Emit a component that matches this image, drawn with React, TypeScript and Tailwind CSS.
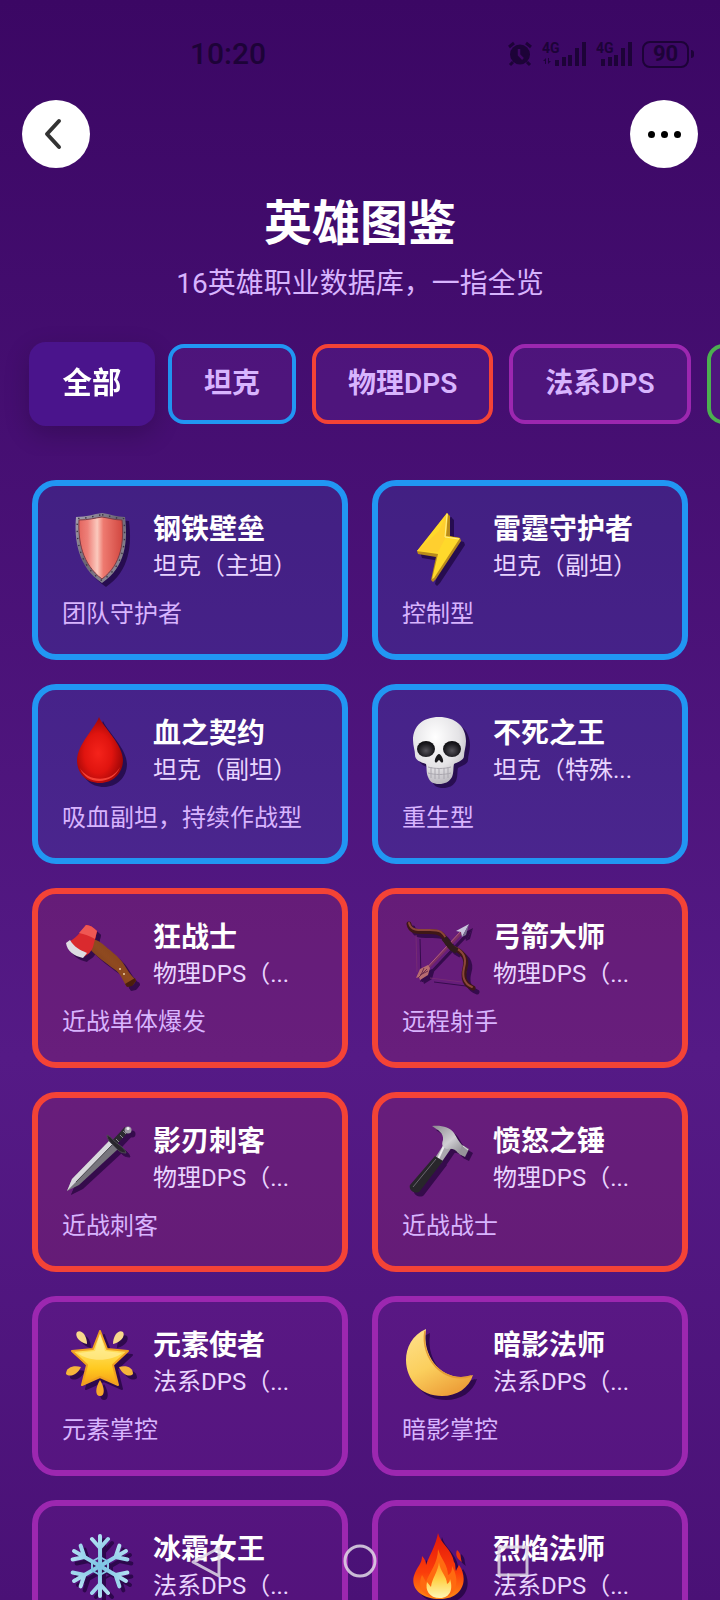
import { useState } from 'react';
import type { ReactNode } from 'react';
import clsx from 'clsx';

type Category = 'tank' | 'physical' | 'magic' | 'healer';

interface Hero {
  name: string;
  role: string;
  description: string;
  category: Category;
  icon: ReactNode;
}

const categoryStyles: Record<Category, { border: string; card: string }> = {
  tank: { border: 'border-[#2196f3]', card: 'bg-[#2196f3]/12' },
  physical: { border: 'border-[#f44336]', card: 'bg-[#f44336]/12' },
  magic: { border: 'border-[#9c27b0]', card: 'bg-[#9c27b0]/12' },
  healer: { border: 'border-[#4caf50]', card: 'bg-[#4caf50]/12' },
};

const filters: { id: Category; text: string }[] = [
  { id: 'tank', text: '坦克' },
  { id: 'physical', text: '物理DPS' },
  { id: 'magic', text: '法系DPS' },
  { id: 'healer', text: '治疗' },
];

function Shield() {
  const outline = 'M38 3C46 4 53 7 61 7C64 30 62 57 38 73C14 57 10 30 12 7C22 7 30 4 38 3Z';
  return (
    <g transform="translate(2 0)">
      <defs>
        <linearGradient id="shieldRim" x1="0" y1="0" x2="1" y2="1">
          <stop offset="0" stopColor="#a9a4b3" />
          <stop offset=".45" stopColor="#6b6574" />
          <stop offset=".8" stopColor="#8a8592" />
          <stop offset="1" stopColor="#3e3946" />
        </linearGradient>
        <linearGradient id="shieldFace" x1="0" y1="0" x2="1" y2="0">
          <stop offset="0" stopColor="#e4665f" />
          <stop offset=".2" stopColor="#ee8079" />
          <stop offset=".42" stopColor="#fbc9bd" />
          <stop offset=".56" stopColor="#ee7a70" />
          <stop offset="1" stopColor="#d14740" />
        </linearGradient>
      </defs>
      <path d={outline} fill="url(#shieldRim)" />
      <path d={outline} fill="none" stroke="#3b3644" strokeWidth="1.500" strokeDasharray="1.500 6" transform="translate(2.3 2) scale(.94)" />
      <path d="M38 7C45 8 51 10 58 10C60 31 58 54 38 69C18 54 14 31 15 10C24 10 31 8 38 7Z" fill="url(#shieldFace)" stroke="#7d3a44" strokeWidth="1" />
    </g>
  );
}

function Bolt() {
  return (
    <>
      <path d="M45 3L48 6L48 26L58 28L59 31L34 69L31 72L29 70L34 47L16 44L15 41Z" fill="#b98a1b" />
      <path d="M45 3L46 4L44 26L58 28L32 68L30 69L36 44L15 41Z" fill="#ffd92b" />
      <path d="M45 3L37 21L15 41L36 42L44 27Z" fill="#ffcf2f" />
      <path d="M45 4L43 27L57 29" fill="none" stroke="#fff08a" strokeWidth="1" />
    </>
  );
}

function Drop() {
  return (
    <>
      <defs>
        <radialGradient id="drop" cx=".46" cy=".55" r=".6">
          <stop offset="0" stopColor="#f5231b" />
          <stop offset=".5" stopColor="#e0140f" />
          <stop offset=".85" stopColor="#a80808" />
          <stop offset="1" stopColor="#8a0508" />
        </radialGradient>
      </defs>
      <path d="M37 3C42 14 61 31 61 46C61 60 50 69 38 69C25 69 15 60 15 46C15 31 33 14 37 3Z" fill="url(#drop)" />
      <path d="M18 54C25 67 49 70 58 53C52 70 25 73 18 54Z" fill="#ff4a3d" opacity=".85" />
    </>
  );
}

function Skull() {
  return (
    <>
      <defs>
        <radialGradient id="skull" cx=".42" cy=".3" r=".75">
          <stop offset="0" stopColor="#ffffff" />
          <stop offset=".6" stopColor="#e4e3e6" />
          <stop offset="1" stopColor="#b4b1b8" />
        </radialGradient>
        <radialGradient id="socket" cx=".5" cy=".6" r=".6">
          <stop offset="0" stopColor="#55535a" />
          <stop offset=".7" stopColor="#1c1b20" />
          <stop offset="1" stopColor="#0c0b0f" />
        </radialGradient>
      </defs>
      <path d="M37 3C53 3 64 12 64 27C64 33 62 37 62 42C62 46 56 48 52 50C51 54 52 58 50 63C47 68 43 70 37 70C31 70 28 68 26 63C24 58 25 54 24 50C18 48 13 46 13 41C13 36 11 32 11 26C11 12 21 3 37 3Z" fill="url(#skull)" />
      <ellipse cx="24" cy="35" rx="9" ry="8" fill="url(#socket)" />
      <ellipse cx="50" cy="35" rx="9" ry="8" fill="url(#socket)" />
      <path d="M37 40C39 40 42 46 41 48C39 50 38 46 37 46C36 46 35 50 33 48C32 46 35 40 37 40Z" fill="#19181c" />
      <path d="M26 53C33 55 42 55 49 53M26 59C33 61 42 61 49 59M29 53V64M33 54V65M37 54V65M42 54V65M46 53V64" fill="none" stroke="#aaa7af" strokeWidth="1" />
    </>
  );
}

function Axe() {
  return (
    <>
      <defs>
        <linearGradient id="axeHandle" x1="0" y1="1" x2="1" y2="0">
          <stop offset="0" stopColor="#6b3012" />
          <stop offset=".5" stopColor="#8f4a20" />
          <stop offset="1" stopColor="#7c3a16" />
        </linearGradient>
      </defs>
      <path d="M26 20C31 20 38 23 43 28C50 34 57 39 61 45C65 51 68 57 74 62C73 66 69 69 65 68C61 65 60 56 52 51C45 46 33 37 28 31Z" fill="url(#axeHandle)" />
      <path d="M63 66L73 60L74 63L70 68L65 69Z" fill="#4c1e0c" />
      <path d="M24 7C28 7 31 9 35 13C34 19 32 24 31 29C29 34 26 37 21 39C14 37 7 32 5 25C13 21 19 14 24 7Z" fill="#da2a2e" />
      <path d="M24 7C28 7 31 9 35 13L33 21C28 18 22 16 17 15Z" fill="#ef5753" />
      <path d="M4 25L8 22C12 29 18 32 25 35L21 40C12 38 5 33 4 25Z" fill="#dedce2" />
      <circle cx="58" cy="51" r="1" fill="#ecd0a8" />
      <circle cx="62" cy="56" r="1" fill="#ecd0a8" />
    </>
  );
}

function Bow() {
  return (
    <>
      <path d="M14 17L15 54M28 60L60 64" stroke="#762b74" strokeWidth="1" fill="none" />
      <path d="M18 58L60 14" stroke="#7d2f62" strokeWidth="3" />
      <path d="M19 56L59 13" stroke="#b05c80" strokeWidth="1" />
      <path d="M7 6C9 20 30 9 39 16C45 20 44 28 51 30C60 33 66 40 63 50C61 58 61 66 71 70" fill="none" stroke="#3f1717" strokeWidth="5" strokeLinecap="round" />
      <path d="M7 5C10 18 30 8 39 14C45 18 45 26 52 29C61 33 65 40 62 50C60 58 62 66 70 69" fill="none" stroke="#8c4738" strokeWidth="2" strokeLinecap="round" />
      <path d="M42 20L50 30L55 33" fill="none" stroke="#301c1c" strokeWidth="6" />
      <path d="M67 6L54 13L59 14L60 19Z" fill="#c9c6dd" />
      <path d="M67 6L60 19L64 17Z" fill="#77718f" />
      <path d="M26 47L18 51L14 60L17 59L18 62L26 57L28 50Z" fill="#b86c70" />
      <path d="M25 51L16 60M22 50L19 57M26 53L18 57" stroke="#6c2d4d" strokeWidth="1" />
    </>
  );
}

function Sword() {
  return (
    <>
      <path d="M48 18L56 27L17 63L5 69L10 57Z" fill="#77757d" />
      <path d="M48 18L51 22L5 69L10 57Z" fill="#d9d8de" />
      <path d="M50 23L14 60" stroke="#4a4850" strokeWidth="1" />
      <path d="M52 21L65 7" stroke="#2b2930" strokeWidth="6" />
      <path d="M54 17L57 20M58 13L61 16M61 9L64 12" stroke="#898790" strokeWidth="1" />
      <path d="M45 13C50 15 52 20 56 22C60 25 63 27 64 31C58 31 56 28 53 25C49 21 45 18 45 13Z" fill="#29262d" stroke="#4c4952" strokeWidth="1" />
      <circle cx="66" cy="8" r="3.500" fill="#9d99a5" />
      <circle cx="66" cy="6.500" r="1.500" fill="#f2f1f6" />
    </>
  );
}

function Hammer() {
  return (
    <>
      <defs>
        <linearGradient id="hammer" x1="0" y1="0" x2="1" y2="1">
          <stop offset="0" stopColor="#8b898f" />
          <stop offset=".5" stopColor="#d0cfd3" />
          <stop offset="1" stopColor="#747278" />
        </linearGradient>
      </defs>
      <path d="M42 22L50 25L39 41L33 36Z" fill="#aaa8ae" />
      <path d="M42 24L36 37" stroke="#ecebee" strokeWidth="2" />
      <path d="M33 34L41 39L18 69C15 73 6 69 8 63Z" fill="#28262b" />
      <path d="M34 37L11 65" stroke="#6a676f" strokeWidth="1" />
      <path d="M30 4C39 3 48 5 52 11C55 16 57 20 60 23L66 27L62 34L56 31C54 27 49 26 45 27C41 26 39 23 41 18C42 11 36 8 30 4Z" fill="url(#hammer)" />
      <path d="M60 23L67 27L63 35L57 32Z" fill="#96939a" />
      <path d="M61 24L66 28" stroke="#dddce0" strokeWidth="1" />
    </>
  );
}

function Star() {
  return (
    <>
      <defs>
        <linearGradient id="star" x1="0" y1="0" x2="0" y2="1">
          <stop offset="0" stopColor="#fff29c" />
          <stop offset=".45" stopColor="#ffd94a" />
          <stop offset=".7" stopColor="#ffc91f" />
          <stop offset="1" stopColor="#f59d16" />
        </linearGradient>
      </defs>
      <path d="M38 5L45 23L66 25L51 39L56 59L38 51L20 59L25 39L10 25L31 23Z" fill="url(#star)" stroke="#f0a021" strokeWidth="2" strokeLinejoin="round" />
      <path d="M38 8L43 25L60 27C50 36 25 36 16 27L33 25Z" fill="#fff6b4" opacity=".5" />
      <path d="M15 6C19 3 25 9 25 18C19 17 12 11 15 6Z" fill="#f8d88c" />
      <path d="M61 6C57 3 51 9 51 18C57 17 64 11 61 6Z" fill="#f8d88c" />
      <path d="M4 48C4 41 12 39 19 41C16 48 8 52 4 48Z" fill="#f6b43b" />
      <path d="M71 48C71 41 64 39 57 41C60 48 67 52 71 48Z" fill="#f6b43b" />
      <path d="M38 54C43 62 43 70 38 70C33 70 33 62 38 54Z" fill="#f8a92b" />
    </>
  );
}

function Moon() {
  return (
    <>
      <defs>
        <linearGradient id="moon" x1=".1" y1="0" x2=".6" y2="1">
          <stop offset="0" stopColor="#ffe08a" />
          <stop offset=".55" stopColor="#fbcf5d" />
          <stop offset="1" stopColor="#eda03a" />
        </linearGradient>
      </defs>
      <path d="M24 3C10 9 4 22 4 34C4 54 19 70 40 70C55 70 67 62 71 49C44 58 19 34 24 3Z" fill="url(#moon)" />
      <path d="M23 5C18 33 43 59 69 50" fill="none" stroke="#e59b35" strokeWidth="1.500" />
    </>
  );
}

function Snowflake() {
  return (
    <>
      <defs>
        <linearGradient id="snow" gradientUnits="userSpaceOnUse" x1="-20" y1="-30" x2="20" y2="30">
          <stop offset="0" stopColor="#c4eaf7" />
          <stop offset=".5" stopColor="#7cc3e4" />
          <stop offset="1" stopColor="#b5e0f2" />
        </linearGradient>
      </defs>
      <g transform="translate(38 36)" fill="none" stroke="url(#snow)" strokeWidth="4" strokeLinecap="round" strokeLinejoin="round">
        {[0, 60, 120, 180, 240, 300].map((angle) => (
          <path key={angle} transform={`rotate(${angle})`} d="M.1 0L0-30M-8-27L0-18L8-27" />
        ))}
        <path d="M0-9L8-4.500L8 4.500L0 9L-8 4.500L-8-4.500Z" strokeWidth="2" />
      </g>
    </>
  );
}

function Flame() {
  return (
    <>
      <defs>
        <linearGradient id="flameOuter" x1="0" y1="0" x2="0" y2="1">
          <stop offset="0" stopColor="#e3170a" />
          <stop offset=".6" stopColor="#fb3d0a" />
          <stop offset="1" stopColor="#ff8a12" />
        </linearGradient>
        <linearGradient id="flameInner" x1="0" y1="0" x2="0" y2="1">
          <stop offset="0" stopColor="#ff9a1c" />
          <stop offset=".5" stopColor="#ffd34a" />
          <stop offset="1" stopColor="#fff7b5" />
        </linearGradient>
      </defs>
      <path d="M36 3C38 13 50 19 52 32C54 34 53 38 54 41C55 38 56 37 57 35C67 49 61 69 38 69C17 69 7 56 13 43C15 37 20 34 20 26C23 29 24 32 24 35C28 24 34 15 36 3Z" fill="url(#flameOuter)" />
      <path d="M55 20C60 24 58 28 60 32C55 29 53 25 55 20Z" fill="#e8320f" />
      <path d="M36 19C39 29 46 35 46 45C50 43 50 39 50 36C58 50 56 67 38 68C20 68 15 56 20 45C22 48 23 50 24 52C28 41 36 33 36 19Z" fill="#ff6a10" />
      <path d="M37 32C38 42 45 46 45 54C47 53 48 51 48 49C51 58 49 68 38 68C27 68 23 60 25 52L29 57C30 48 36 42 37 32Z" fill="url(#flameInner)" />
    </>
  );
}

const heroes: Hero[] = [
  { name: '钢铁壁垒', role: '坦克（主坦）', description: '团队守护者', category: 'tank', icon: <Shield /> },
  { name: '雷霆守护者', role: '坦克（副坦）', description: '控制型', category: 'tank', icon: <Bolt /> },
  { name: '血之契约', role: '坦克（副坦）', description: '吸血副坦，持续作战型', category: 'tank', icon: <Drop /> },
  { name: '不死之王', role: '坦克（特殊...', description: '重生型', category: 'tank', icon: <Skull /> },
  { name: '狂战士', role: '物理DPS（...', description: '近战单体爆发', category: 'physical', icon: <Axe /> },
  { name: '弓箭大师', role: '物理DPS（...', description: '远程射手', category: 'physical', icon: <Bow /> },
  { name: '影刃刺客', role: '物理DPS（...', description: '近战刺客', category: 'physical', icon: <Sword /> },
  { name: '愤怒之锤', role: '物理DPS（...', description: '近战战士', category: 'physical', icon: <Hammer /> },
  { name: '元素使者', role: '法系DPS（...', description: '元素掌控', category: 'magic', icon: <Star /> },
  { name: '暗影法师', role: '法系DPS（...', description: '暗影掌控', category: 'magic', icon: <Moon /> },
  { name: '冰霜女王', role: '法系DPS（...', description: '冰霜掌控', category: 'magic', icon: <Snowflake /> },
  { name: '烈焰法师', role: '法系DPS（...', description: '火焰掌控', category: 'magic', icon: <Flame /> },
];

function StatusBar() {
  return (
    <div className="flex h-[100px] items-center justify-between pt-2 pr-[26px] pl-[190px] text-[#1d0338]">
      <span className="text-[30px] leading-9 font-medium">10:20</span>
      <div className="flex items-center gap-[9px]">
        <svg width="26" height="26" viewBox="0 0 26 26" fill="none" stroke="currentColor">
          <circle cx="13" cy="13.500" r="10" fill="currentColor" stroke="none" />
          <path d="M2 6L7 2M24 6L19 2M6 21L3 24M20 21L23 24" strokeWidth="3" />
          <path d="M12 8V14L16 18" stroke="#3f0864" strokeWidth="2.500" />
        </svg>
        <svg width="45" height="26" viewBox="0 0 45 26" fill="currentColor">
          <text x="0" y="12" fontSize="14" fontWeight="700">4G</text>
          <path d="M1 20L4 17V23H3V20ZM9 20L6 23V17H7V20Z" />
          <path d="M13 19h4v6h-4zM20 16h4v9h-4zM26 14h4v11h-4zM33 7h4v18h-4zM40 1h4v24h-4z" />
        </svg>
        <svg width="37" height="26" viewBox="0 0 37 26" fill="currentColor">
          <text x="0" y="12" fontSize="14" fontWeight="700">4G</text>
          <path d="M5 18h4v7H5zM12 16h4v9h-4zM18 14h4v11h-4zM25 7h4v18h-4zM32 1h4v24h-4z" />
        </svg>
        <div className="flex items-center gap-[2px]">
          <span className="flex h-[27px] w-[47px] items-center justify-center rounded-lg border-2 border-current text-[22px] leading-6 font-bold">90</span>
          <span className="h-2 w-[3px] rounded-r bg-current" />
        </div>
      </div>
    </div>
  );
}

function HeroCard({ hero }: { hero: Hero }) {
  const style = categoryStyles[hero.category];

  return (
    <article className={clsx('min-w-0 rounded-3xl border-6 px-6 pt-[26px] pb-[22px]', style.border, style.card)}>
      <div className="mb-3 flex gap-[15px]">
        <svg
          viewBox="0 2 76 72"
          aria-hidden="true"
          className="h-[72px] w-[76px] shrink-0 overflow-visible drop-shadow-[4px_4px_0_rgba(20,0,45,0.6)]"
        >
          {hero.icon}
        </svg>
        <div className="min-w-0 flex-1">
          <h2 className="truncate text-[28px] leading-9 font-bold text-white">{hero.name}</h2>
          <p className="truncate text-2xl leading-9 text-[#e9d5ff]">{hero.role}</p>
        </div>
      </div>
      <p className="truncate text-2xl leading-9 text-[#d8b4fe]">{hero.description}</p>
    </article>
  );
}

export default function App() {
  const [selected, setSelected] = useState<Category | 'all'>('all');
  const visible = selected === 'all' ? heroes : heroes.filter((hero) => hero.category === selected);

  return (
    <div
      lang="zh-CN"
      className="relative h-screen overflow-hidden bg-[linear-gradient(to_bottom,#3b0764_0%,#551a86_66%,#4a1176_100%)] font-[Roboto,'Noto_Sans_CJK_SC',sans-serif]"
    >
      <div className="h-full overflow-y-auto [scrollbar-width:none]">
        <StatusBar />
        <header>
          <div className="flex justify-between px-[22px]">
            <button type="button" aria-label="返回" className="flex size-[68px] items-center justify-center rounded-full bg-white">
              <svg width="68" height="68" viewBox="0 0 68 68" fill="none" stroke="#333" strokeWidth="4" strokeLinecap="round" strokeLinejoin="round">
                <path d="M37 21L25 34L37 47" />
              </svg>
            </button>
            <button type="button" aria-label="更多" className="flex size-[68px] items-center justify-center gap-[6px] rounded-full bg-white">
              <span className="size-[7px] rounded-full bg-black" />
              <span className="size-[7px] rounded-full bg-black" />
              <span className="size-[7px] rounded-full bg-black" />
            </button>
          </div>
          <h1 className="mt-[26px] text-center text-5xl leading-[60px] font-bold text-white">英雄图鉴</h1>
          <p className="mt-2 text-center text-[28px] leading-11 text-[#d8b4fe]">16英雄职业数据库，一指全览</p>
        </header>

        <nav className="mt-[6px] flex gap-4 overflow-x-auto px-8 py-8 [scrollbar-width:none]">
          <button
            type="button"
            onClick={() => setSelected('all')}
            className={clsx(
              'h-20 shrink-0 rounded-2xl px-8 text-[28px] font-bold',
              selected === 'all' ? 'scale-105 bg-[#4a148c] text-white shadow-[0_8px_24px_rgba(0,0,0,0.2)]' : 'bg-[#581c87]/50 text-[#d8b4fe]',
            )}
          >
            全部
          </button>
          {filters.map((filter) => (
            <button
              key={filter.id}
              type="button"
              onClick={() => setSelected(filter.id)}
              className={clsx(
                'h-20 shrink-0 rounded-2xl border-4 px-8 text-[28px] font-semibold',
                categoryStyles[filter.id].border,
                selected === filter.id ? 'scale-105 bg-[#4a148c] text-white' : 'bg-[#581c87]/50 text-[#d8b4fe]',
              )}
            >
              {filter.text}
            </button>
          ))}
        </nav>

        <main className="mt-6 grid grid-cols-2 gap-6 px-8 pb-8">
          {visible.map((hero) => (
            <HeroCard key={hero.name} hero={hero} />
          ))}
        </main>
      </div>

      {/* system navigation keys */}
      <div className="absolute inset-x-0 bottom-0 grid h-[78px] grid-cols-3 place-items-center px-[130px] text-[#e0dbe6]/85">
        <svg width="34" height="34" viewBox="0 0 34 34" fill="none" stroke="currentColor" strokeWidth="3" strokeLinejoin="round">
          <path d="M3 18L29 4V32Z" />
        </svg>
        <svg width="34" height="34" viewBox="0 0 34 34" fill="none" stroke="currentColor" strokeWidth="3">
          <circle cx="17" cy="17" r="15" />
        </svg>
        <svg width="34" height="34" viewBox="0 0 34 34" fill="none" stroke="currentColor" strokeWidth="3">
          <rect x="3" y="3" width="28" height="28" rx="1" />
        </svg>
      </div>
    </div>
  );
}
